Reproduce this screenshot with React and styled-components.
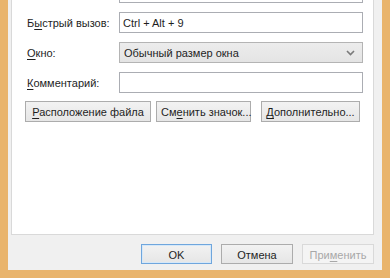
import styled, { createGlobalStyle } from "styled-components";

const GlobalStyle = createGlobalStyle`
  html, body {
    margin: 0;
    padding: 0;
    background: #e9b46c;
  }
  body {
    font-family: "Liberation Sans", Arial, sans-serif;
    font-size: 11px;
    color: #1e1e1e;
  }
`;

const Frame = styled.div`
  width: 390px;
  height: 278px;
  box-sizing: border-box;
  background: #e9b46c;
  padding: 0 8px 8px 8px;
  display: flex;
  overflow: hidden;
`;

const Dialog = styled.div`
  flex: 1;
  background: #f0f0f0;
  display: flex;
  flex-direction: column;
  padding: 0 8px 0 3px;
`;

const TabPage = styled.div`
  height: 235px;
  box-sizing: border-box;
  background: #fff;
  border: 1px solid #d9d9d9;
  border-top: none;
  padding: 0 10px 0 14px;
  overflow: hidden;
`;

const Form = styled.div`
  display: grid;
  grid-template-columns: 92px 1fr;
  grid-auto-rows: 21px;
  row-gap: 9px;
  align-items: center;
  margin-top: -18px;
  margin-left: 1px;
`;

const Label = styled.label`
  white-space: nowrap;
  padding-top: 1px;
`;

const Key = styled.span`
  text-decoration: underline;
  text-underline-offset: 2px;
`;

const TextBox = styled.div`
  height: 21px;
  box-sizing: border-box;
  border: 1px solid #abadb3;
  background: #fff;
  padding: 1px 3px 0;
  display: flex;
  align-items: center;
`;

const Combo = styled.div`
  height: 21px;
  box-sizing: border-box;
  border: 1px solid #b4b4b4;
  background: linear-gradient(#ececec, #e4e4e4);
  padding: 1px 7px 0 4px;
  display: flex;
  align-items: center;
  justify-content: space-between;
`;

const ButtonRow = styled.div`
  display: flex;
  gap: 5px;
  margin-top: 8px;
  margin-left: -1px;
`;

const Button = styled.button`
  height: ${(p) => p.$h || 21}px;
  width: ${(p) => (p.$w ? `${p.$w}px` : "auto")};
  margin-left: ${(p) => p.$ml || 0}px;
  box-sizing: border-box;
  padding: 1px 4px 0;
  font: inherit;
  color: ${(p) => (p.disabled ? "#a8a8a8" : "#1e1e1e")};
  border: 1px solid
    ${(p) => (p.$default ? "#6fa6dd" : p.disabled ? "#d9d9d9" : "#acacac")};
  background: ${(p) =>
    p.disabled ? "#f4f4f4" : "linear-gradient(#f2f2f2, #e6e6e6)"};
  box-shadow: ${(p) => (p.$default ? "inset 0 0 0 1px #d6e8f8" : "none")};
  border-radius: 0;
  white-space: nowrap;
`;

const Footer = styled.div`
  flex: 1;
  display: flex;
  justify-content: flex-end;
  align-items: flex-start;
  gap: 9px;
  padding-top: 9px;
`;

const Chevron = () => (
  <svg width="9" height="6" viewBox="0 0 9 6">
    <path d="M1 1l3.5 3.5L8 1" fill="none" stroke="#7a7a7a" strokeWidth="1.6" />
  </svg>
);

const App = () => (
  <>
    <GlobalStyle />
    <Frame>
      <Dialog>
        <TabPage>
          <Form>
            <Label />
            <TextBox />
            <Label>
              Б<Key>ы</Key>стрый вызов:
            </Label>
            <TextBox>Ctrl + Alt + 9</TextBox>
            <Label>
              <Key>О</Key>кно:
            </Label>
            <Combo>
              <span>Обычный размер окна</span>
              <Chevron />
            </Combo>
            <Label>
              <Key>К</Key>омментарий:
            </Label>
            <TextBox />
          </Form>
          <ButtonRow>
            <Button $w={126}>
              <Key>Р</Key>асположение файла
            </Button>
            <Button $w={95}>
              См<Key>е</Key>нить значок...
            </Button>
            <Button $w={99} $ml={5}>
              <Key>Д</Key>ополнительно...
            </Button>
          </ButtonRow>
        </TabPage>
        <Footer>
          <Button $w={71} $h={20} $default>
            OK
          </Button>
          <Button $w={72} $h={20}>
            Отмена
          </Button>
          <Button $w={72} $h={20} disabled>
            При<Key>м</Key>енить
          </Button>
        </Footer>
      </Dialog>
    </Frame>
  </>
);

export default App;
